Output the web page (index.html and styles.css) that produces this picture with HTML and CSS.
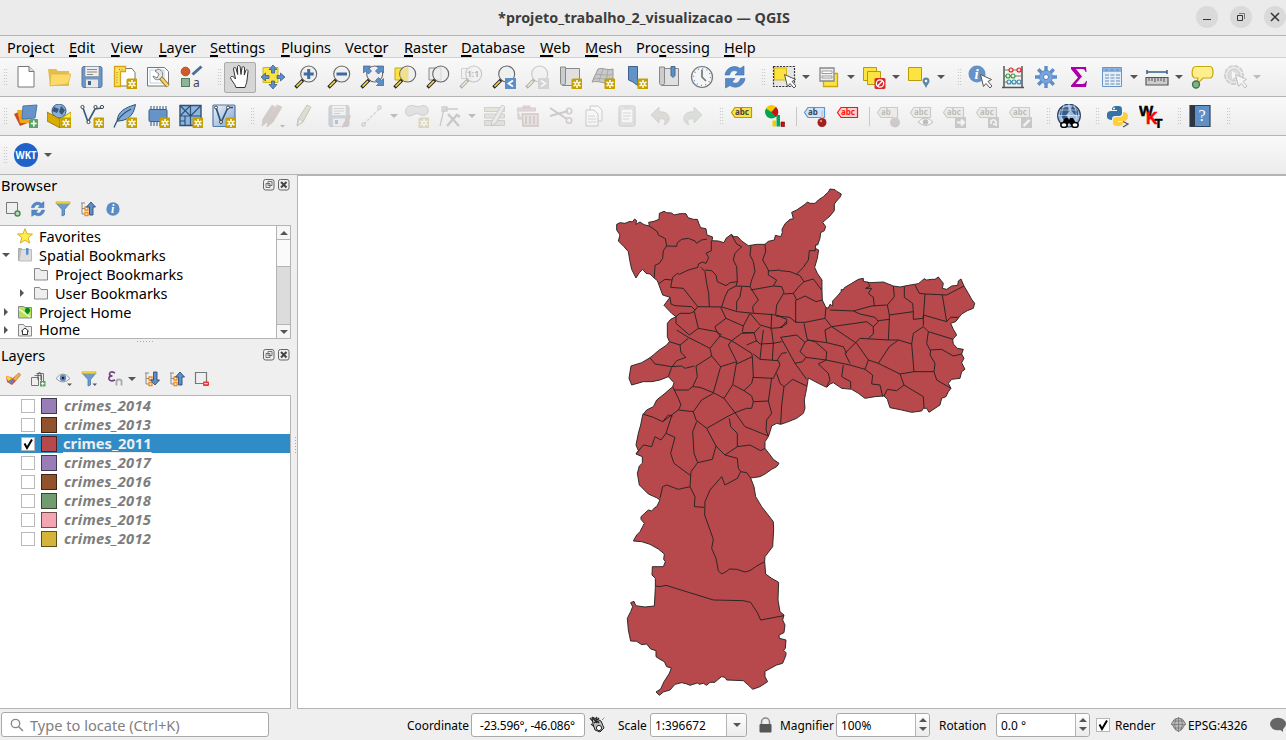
FILE: index.html
```
<!DOCTYPE html>
<html lang="en">
<head>
<meta charset="utf-8">
<title>*projeto_trabalho_2_visualizacao — QGIS</title>
<link rel="stylesheet" href="styles.css">
</head>
<body>
<svg class="defs" width="0" height="0">
<defs>
<linearGradient id="gb" x1="0" y1="0" x2="1" y2="1"><stop offset="0" stop-color="#eef4fa"/><stop offset="1" stop-color="#7ba3d0"/></linearGradient>
<symbol id="badge" viewBox="0 0 24 24"><rect x="13.500" y="13.500" width="11" height="11" rx="1.500" fill="#c4a000"/><path d="M19 15v8M15.500 17l7 4M22.500 17l-7 4" stroke="#fff" stroke-width="1.500"/><circle cx="19" cy="19" r="1" fill="#c4a000"/></symbol>
<symbol id="lens" viewBox="0 0 24 24"><path d="M9.500 14.500L1.500 22.500" stroke="#222" stroke-width="3.400"/><path d="M8 16L2.500 21.500" stroke="#fcd94a" stroke-width="1.700"/><circle cx="14.700" cy="9" r="8" fill="#eee" fill-opacity=".75" stroke="#666" stroke-width="1.100"/></symbol>
<symbol id="cursor" viewBox="0 0 24 24"><path d="M12.500 9.500l3 12 2.500-3 4 4.500 2-2-4-4.500 3.500-2z" fill="#fff" stroke="#555" stroke-width="1"/></symbol>
<symbol id="tag" viewBox="0 0 24 24"><path d="M1.500 8.500L5 3.500h16.500v10H5z" stroke-width="1.200"/></symbol>
<symbol id="new" viewBox="0 0 24 24"><path d="M4 1.500h11l5 5V22H4z" fill="#fff" stroke="#777" stroke-width="1"/><path d="M15 1.500v5h5" fill="#ddd" stroke="#777"/></symbol>
<symbol id="open" viewBox="0 0 24 24"><path d="M1 4h8l2 2h11v15H3z" fill="#e5bd4a"/><path d="M4 9h20l-3 10-18 2z" fill="#fbd96b" stroke="#e0b547" stroke-width=".8"/></symbol>
<symbol id="save" viewBox="0 0 24 24"><rect x="2" y="1.500" width="20" height="21" rx="2" fill="#6b97c6" stroke="#54779d"/><path d="M5 1.500h14v10H5z" fill="#eee" stroke="#888" stroke-width=".6"/><path d="M7 4.500h10M7 7h10M7 9.500h6" stroke="#888"/><path d="M6 14.500h12v8H6z" fill="#e8e8e8"/><path d="M8 16h3v4H8z" fill="#3d618c"/></symbol>
<symbol id="layout" viewBox="0 0 24 24"><path d="M3 3.500h16l3 4V21H3z" fill="#fff" stroke="#777"/><path d="M1.500 1.500h11v5h-5v15h-6z" fill="#fce05f" stroke="#d5a517" stroke-width="1.300"/><path d="M4 7v12M6 4.500h5" stroke="#a98308" stroke-dasharray="1 1.500"/><use href="#badge"/></symbol>
<symbol id="wrench" viewBox="0 0 24 24"><path d="M1.500 2.500h17l4 4V21h-21z" fill="#fff" stroke="#777"/><path d="M4 5h14v13H4z" fill="none" stroke="#b8cff0"/><path d="M13 11l9 10" stroke="#9c7b2b" stroke-width="4.500"/><path d="M15 13l7 8" stroke="#f5d56c" stroke-width="2.500"/><path d="M9 6l4 3-2 4-4-2c1 4 5 5 8 2s2-8-3-9z" fill="#e6e6e6" stroke="#666" stroke-width=".8"/></symbol>
<symbol id="style" viewBox="0 0 24 24"><circle cx="6.500" cy="6.500" r="4.300" fill="#d05b31" stroke="#b04c25"/><path d="M13.500 9.500l9-8" stroke="#4d6f96" stroke-width="3"/><rect x="2.500" y="13.500" width="8" height="8" fill="#8fb497" stroke="#547f5d"/><text x="14" y="22" font-family="Noto Sans" font-size="12" fill="#444">a</text></symbol>
<symbol id="pan" viewBox="0 0 24 24"><path d="M8 22.500c-1-4-5-7-5.500-10 1-2 3-1 5 1.500L5.500 4c0-2 2-2 2.500-.5l1.700 6L9.500 2c0-2 2.500-2 2.700 0l.8 7.500L14 2.500c.5-1.500 2.500-1 2.500.5L16.300 10l1.500-4.500c.7-1.500 2.500-.5 2.200 1L19 15c-.3 4-1.500 5-2 7.500z" fill="#fff" stroke="#333" stroke-width="1"/></symbol>
<symbol id="pansel" viewBox="0 0 24 24"><path d="M2 2.500h15v15H2z" fill="#fbe342" stroke="#d1b41a"/><path d="M12 0l4 4.500h-2.500V8h-3V4.500H8zM12 24l4-4.500h-2.500V16h-3v3.500H8zM0 12l4.500-4v2.500H8v3H4.500V16zM24 12l-4.500-4v2.500H16v3h3.500V16z" fill="#5d8fc6" stroke="#3d618c" stroke-width=".8"/></symbol>
<symbol id="zin" viewBox="0 0 24 24"><use href="#lens"/><path d="M14.700 4v10M9.700 9h10" stroke="#3d6ba0" stroke-width="3"/></symbol>
<symbol id="zout" viewBox="0 0 24 24"><use href="#lens"/><path d="M9.500 9h10.500" stroke="#3d6ba0" stroke-width="3"/></symbol>
<symbol id="zfull" viewBox="0 0 24 24"><use href="#lens"/><path d="M3.500 1h7l-2 2 3 3-3 3-3-3-2 2zM23.500 1h-7l2 2-3 3 3 3 3-3 2 2zM23.500 20.500h-7l2-2-3-3 3-3 3 3 2-2z" fill="#5d8fc6" stroke="#3d618c" stroke-width=".7"/></symbol>
<symbol id="zsel" viewBox="0 0 24 24"><path d="M2 3h13v12H2z" fill="#fbe342" stroke="#c9a90f"/><use href="#lens"/><path d="M7.500 6l7.500-4v14H11L7.500 12z" fill="#efe07a" opacity=".8"/></symbol>
<symbol id="zlay" viewBox="0 0 24 24"><path d="M3 3h12v12H3z" fill="#eee" stroke="#888"/><use href="#lens"/></symbol>
<symbol id="z11" viewBox="0 0 24 24"><path d="M2.500 3.500h10v10h-10z" fill="#eee" stroke="#888"/><use href="#lens"/><text x="8" y="12" font-family="Noto Sans" font-size="8.500" font-weight="700" fill="#333">1:1</text></symbol>
<symbol id="zlast" viewBox="0 0 24 24"><use href="#lens"/><rect x="13" y="13" width="11" height="11" fill="#5d8fc6"/><path d="M21 15.500l-4.500 3 4.500 3" fill="none" stroke="#fff" stroke-width="1.700"/></symbol>
<symbol id="znext" viewBox="0 0 24 24"><use href="#lens"/><rect x="13" y="13" width="11" height="11" fill="#999"/><path d="M16 15.500l4.500 3-4.500 3" fill="none" stroke="#fff" stroke-width="1.700"/></symbol>
<symbol id="book" viewBox="0 0 24 24"><path d="M2.500 2h5v18h-3c-2 0-2-2-2-2z" fill="#ccc" stroke="#888"/><path d="M7.500 3.500h14v17h-17c2 0 3-1 3-3z" fill="#e0e0e0" stroke="#888"/></symbol>
<symbol id="viewnew" viewBox="0 0 24 24"><use href="#book"/><use href="#badge"/></symbol>
<symbol id="view3d" viewBox="0 0 24 24"><path d="M7 4c5-2 9 2 15 0v14c-7 2-14-3-21-1z" fill="#c9c9c9" stroke="#999"/><path d="M4 10c6-2 11 2 18-1M3 14c7-2 12 2 19-1M12 4L8 16M17 5l-2 12" fill="none" stroke="#aaa"/><use href="#badge"/></symbol>
<symbol id="bmnew" viewBox="0 0 24 24"><path d="M4.500 1.500h9v19l-4.500-3.500-4.500-2z" fill="#6292c6" stroke="#3d618c"/><use href="#badge"/></symbol>
<symbol id="bms" viewBox="0 0 24 24"><use href="#book"/><path d="M14 1.500h4v9l-2 2-2-2z" fill="#5d8fc6" stroke="#3d618c" stroke-width=".9"/></symbol>
<symbol id="clock" viewBox="0 0 24 24"><circle cx="12" cy="12" r="10.500" fill="#f3f5f7" stroke="#777" stroke-width="1.200"/><circle cx="12" cy="12" r="8.500" fill="none" stroke="#6394c8" stroke-width="1.300" stroke-dasharray="1 3.450"/><path d="M12 4.500V12l4 4" fill="none" stroke="#777" stroke-width="1.700"/></symbol>
<symbol id="refresh" viewBox="0 0 24 24"><path d="M2 10C3 3 11-1 17 3.500L21 1v9h-9l3-3.200C11 4.500 8 5.500 6.500 10z" fill="#5589c8" stroke="#3d6da8" stroke-width=".6"/><path d="M22 13.500C21 21 13 24.500 7 20.500L2.500 23v-9.500h9.500l-3 3.500c4 2.500 7 1 8.500-3.500z" fill="#5589c8" stroke="#3d6da8" stroke-width=".6"/></symbol>
<symbol id="select" viewBox="0 0 24 24"><path d="M1.500 1.500h21v20h-21z" fill="#e6e6e6" stroke="#333" stroke-width="1.200" stroke-dasharray="2 1.200"/><path d="M2.500 3h12v12h-12z" fill="#fbe342" stroke="#d1b41a"/><use href="#cursor"/></symbol>
<symbol id="selform" viewBox="0 0 24 24"><path d="M6.500 8.500h14v13h-14z" fill="#fbe342" stroke="#c9a90f" stroke-width="1.300"/><path d="M3 3h14v13H3z" fill="#eee" stroke="#888" stroke-width="1.300"/><path d="M5 6h10v2.500H5zM5 11h10v2H5z" fill="#fff" stroke="#888" stroke-width=".8"/></symbol>
<symbol id="desel" viewBox="0 0 24 24"><path d="M1.500 2.500h13v13h-13z" fill="#fbe342" stroke="#b89b06"/><path d="M5.500 6.500h13v13h-13z" fill="#fbe342" stroke="#b89b06"/><rect x="12.500" y="13" width="11" height="11" rx="1.500" fill="#d82a2a"/><circle cx="18" cy="18.500" r="3.700" fill="none" stroke="#fff" stroke-width="1.300"/><path d="M15.500 21l5-5" stroke="#fff" stroke-width="1.300"/></symbol>
<symbol id="selloc" viewBox="0 0 24 24"><path d="M1.500 2.500h13v13h-13z" fill="#fbe342" stroke="#b89b06"/><path d="M19 23c-1-3-3.500-4.500-3.500-7a3.500 3.500 0 0 1 7 0c0 2.500-2.500 4-3.500 7z" fill="#5f86a6"/><circle cx="19" cy="16" r="1.300" fill="#fff"/></symbol>
<symbol id="info" viewBox="0 0 24 24"><circle cx="12" cy="12" r="10" fill="#5c8cc4"/><text x="9" y="18" font-family="Liberation Serif" font-size="18" font-style="italic" font-weight="700" fill="#fff">i</text></symbol>
<symbol id="ident" viewBox="0 0 24 24"><circle cx="9" cy="9" r="8.500" fill="#6593c8"/><text x="6.500" y="14" font-family="Liberation Serif" font-size="15" font-style="italic" font-weight="700" fill="#fff">i</text><use href="#cursor"/></symbol>
<symbol id="abacus" viewBox="0 0 24 24"><path d="M3 1v21M21 1v21M1 22.500h22" stroke="#555" stroke-width="1.500"/><path d="M3 5h18M3 11h18M3 17h18" stroke="#777"/><g stroke-width="1.100"><g fill="#fdd" stroke="#d22"><circle cx="10" cy="5" r="2"/><circle cx="18" cy="5" r="2"/></g><g fill="#dfd" stroke="#393"><circle cx="7" cy="11" r="2"/><circle cx="12" cy="11" r="2"/></g><g fill="#def" stroke="#38a"><circle cx="8" cy="17" r="2"/><circle cx="13" cy="17" r="2"/><circle cx="18" cy="17" r="2"/></g></g></symbol>
<symbol id="gear" viewBox="0 0 24 24"><path d="M12 1v22M1 12h22M4.200 4.200l15.600 15.600M19.800 4.200L4.200 19.800" stroke="#5c8fca" stroke-width="3.400"/><circle cx="12" cy="12" r="6.500" fill="#79a5da" stroke="#5c8fca"/><circle cx="12" cy="12" r="2.500" fill="#fff" stroke="#4c7fbd"/></symbol>
<symbol id="sigma" viewBox="0 0 24 24"><path d="M4 2h15l.5 5h-1c-.5-2.500-2-3-4-3H9l6 7.500L8.500 19H15c2.500 0 3.500-1 4-3h1l-1 6H4v-1.500L11 12.500 4 4z" fill="#a800a8"/></symbol>
<symbol id="table" viewBox="0 0 24 24"><path d="M2.500 2.500h19v19h-19z" fill="#e4eef8" stroke="#6a94c2"/><path d="M3 3h18v4H3z" fill="#8db4de"/><path d="M5 5h3M10 5h4M16 5h3M5 10h4M10.500 10h4M16 10h4M5 13h4M10.500 13h4M16 13h4M5 16h4M10.500 16h4M16 16h4M5 19h4M10.500 19h4M16 19h4" stroke="#5f8bbb" stroke-width="1"/></symbol>
<symbol id="ruler" viewBox="0 0 24 24"><path d="M2 7h20M2 5v4M22 5v4" stroke="#3a5f8a" stroke-width="1.500"/><path d="M1 12.500h22v7.500H1z" fill="#ccc" stroke="#555" stroke-width="1.200"/><path d="M4 13v3M7 13v3M10 13v4M13 13v3M16 13v3M19 13v4" stroke="#555"/></symbol>
<symbol id="tip" viewBox="0 0 24 24"><path d="M6 1.500h14c4 0 4 11.500 0 11.500h-7l-6 6 1-6H5c-4 0-4-11.500 1-11.500z" fill="#fdf08c" stroke="#c9a60c" stroke-width="1.200"/><circle cx="6" cy="19.500" r="3.500" fill="#78b87e" stroke="#4d6a50" stroke-width="1.300"/></symbol>
<symbol id="action" viewBox="0 0 24 24"><circle cx="11" cy="10" r="9" fill="#ddd" stroke="#888" stroke-width="2" stroke-dasharray="5 1"/><circle cx="11" cy="10" r="6" fill="#aaa" stroke="#777"/><path d="M9 6v8l6-4z" fill="#fff"/><use href="#cursor"/></symbol>
<symbol id="dsm" viewBox="0 0 24 24"><path d="M0 10l9-4 7 12-10 4z" fill="#cc4a29"/><path d="M3 6h12v13H6z" fill="#f0a818"/><path d="M9 2l14-1-2 13-13 1z" fill="#6694c8" stroke="#4a76a8"/><rect x="15" y="15" width="9.500" height="9.500" rx="1.500" fill="#5ba266"/><path d="M19.800 16.500v6M16.800 19.500h6" stroke="#fff" stroke-width="1.600"/></symbol>
<symbol id="gpkg" viewBox="0 0 24 24"><circle cx="12" cy="7" r="7" fill="#89b0d6" stroke="#3a5d85"/><path d="M7 3l5 2-2 4-5-2zM14 2l4 4-3 5-3-3z" fill="#38597d"/><path d="M0 8l13 7v9L0 17z" fill="#d8ac00" stroke="#8a6d00" stroke-width=".8"/><path d="M13 15l11-7v9l-11 7z" fill="#fff04a" stroke="#a58500" stroke-width=".8"/><use href="#badge"/></symbol>
<symbol id="shp" viewBox="0 0 24 24"><path d="M3 4l5 14 7-13 7-1" fill="none" stroke="#385c85" stroke-width="1.700"/><g fill="#fff" stroke="#444"><circle cx="2.500" cy="3" r="1.600"/><circle cx="15.500" cy="3" r="1.600"/><circle cx="22" cy="3" r="1.600"/><circle cx="8.500" cy="18" r="1.600"/></g><use href="#badge"/></symbol>
<symbol id="spatia" viewBox="0 0 24 24"><path d="M4 17C5 7 12 4 22.500 0.500 21 8 18 16 6 17z" fill="#7fa9d6" stroke="#2f5279"/><path d="M1 23.500C4 15 10 9 18 5" fill="none" stroke="#2f5279" stroke-width="1.200"/><use href="#badge"/></symbol>
<symbol id="memory" viewBox="0 0 24 24"><path d="M5 2v20M8 2v20M11 2v20M14 2v20M17 2v20M20 2v20" stroke="#2f5279"/><rect x="3" y="5.500" width="18" height="12" rx="1" fill="#6694c8" stroke="#3d618c"/><use href="#badge"/></symbol>
<symbol id="mesh" viewBox="0 0 24 24"><path d="M1 1.500h21v20H1z" fill="#8fb4de" stroke="#2f5279" stroke-width="1.400"/><path d="M11.500 1v21M1 12h21M1 1.500L11.500 12M22 1.500L11.500 12M11.500 1.500L1 12M6 12v10M1 17h5" fill="none" stroke="#2f5279" stroke-width="1.200"/><use href="#badge"/></symbol>
<symbol id="virt" viewBox="0 0 24 24"><rect x="1" y="1" width="22" height="21.500" rx="1" fill="url(#gb)" stroke="#5179a6" stroke-width="1.200"/><path d="M4 3.500l5 15 7-15h5" fill="none" stroke="#2f5279" stroke-width="1.700"/><g fill="#fff" stroke="#444"><circle cx="4" cy="3.500" r="1.500"/><circle cx="16" cy="3.500" r="1.500"/><circle cx="9" cy="18" r="1.500"/></g><use href="#badge"/></symbol>
<symbol id="pen" viewBox="0 0 24 24"><path d="M4 15L13 1l4 2-8 15-6 4z" fill="#c0b060" stroke="#666"/><path d="M3.500 21.500L5 15l4 2.500z" fill="#eee" stroke="#666" stroke-width=".7"/></symbol>
<symbol id="pens" viewBox="0 0 24 24"><path d="M2 15L11 1l3 2-8 15-5 4zM7 16l9-15 5 2-9 15-6 5z" fill="#b07060" stroke="#888"/><path d="M19 21h5l-2.500 2.500z" fill="#444"/></symbol>
<symbol id="savee" viewBox="0 0 24 24"><use href="#save"/><path d="M16 20l6-10 2 2-5 10-4 2z" fill="#b07060"/></symbol>
<symbol id="line" viewBox="0 0 24 24"><path d="M4 20L20 4" stroke="#999" stroke-width="1.500" stroke-dasharray="3 1.500"/><path d="M2 19h3v3H2zM18 2h3v3h-3z" fill="#ddd" stroke="#777"/></symbol>
<symbol id="blob" viewBox="0 0 24 24"><path d="M4 2c4-2 7 2 12 0s8 2 7 6-6 4-9 2-6 2-10 2-5-8 0-10z" fill="#bbb" stroke="#777"/><use href="#badge"/></symbol>
<symbol id="vertex" viewBox="0 0 24 24"><path d="M2 22L6 5h14M4 3h5v4H4z" fill="none" stroke="#777" stroke-width="1.300"/><path d="M9 22l10-11 3 2M10 10l11 12" fill="none" stroke="#777" stroke-width="2.500"/></symbol>
<symbol id="attr" viewBox="0 0 24 24"><path d="M1.500 3.500h20v4h-20zM1.500 10h20v4h-20zM1.500 16.500h20v5h-20z" fill="#b9c98a" stroke="#888"/><path d="M9 17L19 1l3 2-9 16-5 3z" fill="#ddd" stroke="#777"/></symbol>
<symbol id="trash" viewBox="0 0 24 24"><path d="M1.500 4h18v3h-18zM7 2h7v2H7zM2 7v8h4" fill="#c99" stroke="#a77"/><path d="M6 10h16v12H7z" fill="#dbb" stroke="#a66" stroke-width="1.300"/><path d="M10 12v8M14 12v8M18 12v8" stroke="#a66" stroke-width="1.500"/></symbol>
<symbol id="cut" viewBox="0 0 24 24"><path d="M1 4l17 11M1 12l18-5" stroke="#777" stroke-width="2"/><g fill="none" stroke="#a77" stroke-width="1.600"><circle cx="20" cy="7" r="2.700"/><circle cx="20" cy="16.500" r="2.700"/></g></symbol>
<symbol id="copy" viewBox="0 0 24 24"><path d="M8 2h8l4 4v11H8z" fill="#fff" stroke="#777"/><path d="M4 6h8l4 4v12H4z" fill="#fff" stroke="#777"/><path d="M6 12h7M6 15h8M6 18h8" stroke="#999"/></symbol>
<symbol id="paste" viewBox="0 0 24 24"><rect x="4" y="2" width="16" height="20" rx="1.500" fill="#ccc" stroke="#777"/><path d="M6 5h12v14H6z" fill="#fff" stroke="#999"/><path d="M9 1h6v4H9z" fill="#aaa"/><path d="M8 9h8M8 12h8M8 15h6" stroke="#999"/></symbol>
<symbol id="undo" viewBox="0 0 24 24"><path d="M3 11l8-8v5c8-1 11 4 10 8-1 3-3 4-5 5 3-5 0-7-5-6v4z" fill="#b5a890" stroke="#987"/></symbol>
<symbol id="redo" viewBox="0 0 24 24"><path d="M21 11l-8-8v5c-8-1-11 4-10 8 1 3 3 4 5 5-3-5 0-7 5-6v4z" fill="#a8b5a0" stroke="#898"/></symbol>
<symbol id="laby" viewBox="0 0 24 24"><use href="#tag" fill="#fbe342" stroke="#b89b06"/><text x="5" y="11.200" class="abc">abc</text></symbol>
<symbol id="diag" viewBox="0 0 24 24"><circle cx="8.500" cy="8" r="6.500" fill="#00a651"/><path d="M8.500 8L3 4.500A6.500 6.500 0 0 1 13 3z" fill="#fbc800"/><path d="M8.500 8L13 3a6.500 6.500 0 0 1 0 10z" fill="#c11"/><path d="M9.500 16.500h3.500v6H9.500z" fill="#fbc800"/><path d="M13.500 11h3.500v11.500h-3.500z" fill="#0a5"/><path d="M18 18h3.500v4.500H18z" fill="#c11" stroke="#700" stroke-width=".6"/></symbol>
<symbol id="labpin" viewBox="0 0 24 24"><use href="#tag" fill="#cfe4ff" stroke="#5599e0"/><text x="5" y="11.200" class="abc">ab</text><path d="M19 7v8" stroke="#ccc" stroke-width="2"/><circle cx="19" cy="18.500" r="4.500" fill="#a31f1f"/><circle cx="18" cy="17" r="1.200" fill="#d88"/></symbol>
<symbol id="labred" viewBox="0 0 24 24"><use href="#tag" fill="#ffd0d0" stroke="#f11"/><text x="5" y="11.200" class="abc warn">abc</text></symbol>
<symbol id="labg" viewBox="0 0 24 24"><use href="#tag" fill="#e0dcc0" stroke="#777"/><text x="5" y="11.200" class="abc">abc</text></symbol>
<symbol id="labp" viewBox="0 0 24 24"><use href="#tag" fill="#e0dcc0" stroke="#777"/><text x="5" y="11.200" class="abc">ab</text><path d="M19 7v8" stroke="#ddd" stroke-width="3"/><circle cx="19" cy="18.500" r="5" fill="#977"/></symbol>
<symbol id="labe" viewBox="0 0 24 24"><use href="#labg"/><path d="M9 18q7-8 15 0-7 7-15 0z" fill="#fff" stroke="#555"/><circle cx="16.500" cy="18" r="2.700" fill="#555"/></symbol>
<symbol id="labm" viewBox="0 0 24 24"><use href="#labg"/><path d="M13 13h11v11H13z" fill="#777"/><path d="M15 18.500h7M19 15.500l3 3-3 3" stroke="#fff" stroke-width="2" fill="none"/></symbol>
<symbol id="labr" viewBox="0 0 24 24"><use href="#labg"/><path d="M13 13h11v11H13z" fill="#777"/><path d="M16 20v-3q3-3 5 1v3l-3-1" stroke="#fff" stroke-width="1.600" fill="none"/></symbol>
<symbol id="labc" viewBox="0 0 24 24"><use href="#labg"/><path d="M13 13h11v11H13z" fill="#777"/><path d="M15.500 22l6-6" stroke="#fff" stroke-width="2.400"/></symbol>
<symbol id="globe" viewBox="0 0 24 24"><circle cx="12" cy="11.500" r="11.300" fill="#9ab9db" stroke="#23405f" stroke-width="1.300"/><path d="M4 4l7-1 2 4-4 4 3 5-4 2-5-7zM15 2l6 4v6l-4-2-3-4z" fill="#365a87"/><path d="M1 11.500h22M3 6h18M12 0v23M7 1q-5 11 0 20M17 1q5 11 0 20" fill="none" stroke="#fff" stroke-width=".5"/><path d="M4 21l4-7h3l1 2 1-2h3l4 7-5 1-3-3-3 3z" fill="#000"/><g fill="#fff" stroke="#000" stroke-width="1.500"><ellipse cx="7" cy="21" rx="3.200" ry="2.500"/><ellipse cx="18" cy="21" rx="3.200" ry="2.500"/></g></symbol>
<symbol id="python" viewBox="0 0 24 24"><path d="M11 2c5 0 5 1 5 5v2c0 2-1 3-3 3H9c-2 0-3 1-3 3v1C0 16 1 12 1 10s2-3 4-3h6V6H6c0-3 1-4 5-4z" fill="#3672a4"/><path d="M12 22c-5 0-5-1-5-5v-1c0-2 1-3 3-3h4c2 0 3-1 3-3V8c5 0 5 3 5 5s-2 4-4 4h-6v1h5c0 3-1 4-5 4z" fill="#fdd03b"/><circle cx="8" cy="4.500" r="1" fill="#fff"/><path d="M17 17.500l5 2.500-5 3" fill="none" stroke="#555" stroke-width="1.300"/></symbol>
<symbol id="wkt" viewBox="0 0 24 24"><g font-family="Liberation Sans" font-weight="700" stroke-width=".5"><text x="0" y="11.500" font-size="15" stroke="#000">W</text><text x="7" y="20" font-size="16" fill="#f00" stroke="#f00">K</text><text x="15.500" y="23.500" font-size="13" stroke="#000">T</text></g></symbol>
<symbol id="help" viewBox="0 0 24 24"><path d="M2 1.500h20v21H2z" fill="#5e90c8" stroke="#31445c" stroke-width="1.200"/><path d="M2 1.500h5v21H2z" fill="#2c3540"/><text x="10.500" y="17" font-family="Liberation Serif" font-size="16" fill="#fff">?</text></symbol>
<symbol id="wktb" viewBox="0 0 24 24"><circle cx="12" cy="12" r="12" fill="#1f62c9"/><text x="1.500" y="16" font-family="Open Sans" font-size="10.500" font-weight="700" fill="#fff" textLength="21" lengthAdjust="spacingAndGlyphs">WKT</text></symbol>
<symbol id="addl" viewBox="0 0 16 16"><path d="M1.500 1.500h11v11h-11z" fill="none" stroke="#777"/><circle cx="12.500" cy="12.500" r="2.500" fill="#b4dcb8" stroke="#4d8a55" stroke-width="1.400"/></symbol>
<symbol id="funnel" viewBox="0 0 16 16"><path d="M1 2l6 6.500V15l2.500-1V8.500L15 2z" fill="#6c9bd0" stroke="#4878ac" stroke-width=".8"/><path d="M1 .8h14v2H1z" fill="#f8d93e" stroke="#c8a80e" stroke-width=".6"/></symbol>
<symbol id="tree" viewBox="0 0 16 16"><path d="M1 2h4M2 2v11h4M2 7.500h4" fill="none" stroke="#888"/><path d="M5 6h3v3H5zM5 11.500h3v3H5z" fill="#fff" stroke="#f08a1c" stroke-width="1.300"/></symbol>
<symbol id="collapse" viewBox="0 0 16 16"><use href="#tree"/><path d="M11 1l4.500 5H13v8H9.500V6H6.500z" fill="#5e8fc6" stroke="#2c4f78" stroke-width=".9"/></symbol>
<symbol id="expand" viewBox="0 0 16 16"><use href="#tree"/><path d="M11 14l4.500-5H13V1H9.500v8H6.500z" fill="#5e8fc6" stroke="#2c4f78" stroke-width=".9"/></symbol>
<symbol id="brush" viewBox="0 0 16 16"><path d="M1 5l5 1 5 4-4 4-5-3z" fill="#e8472f"/><path d="M1 5l4 1 2 2-4 2z" fill="#fbd52e"/><path d="M3 11l4-3 2 2-3 3z" fill="#5588cc"/><path d="M8 7l6-5 1.500 2-5 6z" fill="#eeb04e" stroke="#b37a1e" stroke-width=".7"/></symbol>
<symbol id="group" viewBox="0 0 16 16"><path d="M1.500 6.500h7v8h-7zM4.500 4.500h7v8M6.500 2.500h7v8" fill="none" stroke="#777"/><path d="M8 9V2.500q1.500-2 3 0V9" fill="none" stroke="#555"/><path d="M10 10h5.500v5.500H10z" fill="#5aa066"/><path d="M12.700 11v3.500M11 12.700h3.500" stroke="#fff"/></symbol>
<symbol id="eye" viewBox="0 0 16 16"><path d="M0 7.500q7-9 14 0-7 7-14 0z" fill="#f6f6f6" stroke="#999"/><circle cx="7" cy="7" r="3.200" fill="#5b8ac0"/><circle cx="7" cy="7" r="1.300" fill="#222"/><path d="M11 12.500h5L13.500 15z" fill="#555"/></symbol>
<symbol id="funneld" viewBox="0 0 16 16"><use href="#funnel"/><path d="M11.500 12.500h4.500l-2.200 2.500z" fill="#555"/></symbol>
<symbol id="eps" viewBox="0 0 16 16"><path d="M8 2Q3-.5 2.500 3q0 2 3 2-4 0-3.500 3Q3 11 8 9" fill="none" stroke="#73457e" stroke-width="1.700"/><path d="M9.500 14.500v-5q2.500-2 5 0v5" fill="none" stroke="#aaa" stroke-width="1.800"/></symbol>
<symbol id="reml" viewBox="0 0 16 16"><path d="M1.500 1.500h11v11h-11z" fill="none" stroke="#777" stroke-width="1.200"/><rect x="9" y="10.500" width="6" height="4.500" rx="1" fill="#e33"/><path d="M10.300 12.700h3.500" stroke="#fff"/></symbol>
<symbol id="dfloat" viewBox="0 0 12 12"><rect x=".5" y=".5" width="10.500" height="10.500" rx="2" fill="none" stroke="#666"/><path d="M5 2.500h4v4H5zM3 4.500h4v4H3z" fill="#eee" stroke="#666" stroke-width=".9"/></symbol>
<symbol id="dclose" viewBox="0 0 12 12"><rect x=".5" y=".5" width="10.500" height="10.500" rx="2" fill="none" stroke="#666"/><path d="M3 3l5.500 5.500M8.500 3L3 8.500" stroke="#444" stroke-width="2"/></symbol>
<symbol id="star" viewBox="0 0 16 16"><path d="M8 .6l2 5.200 5.500.3-4.300 3.500 1.500 5.500L8 12l-4.700 3.100 1.500-5.500L.5 6.100 6 5.800z" fill="#fdf04d" stroke="#d8ac28"/></symbol>
<symbol id="folder" viewBox="0 0 16 16"><path d="M1.500 2.500h5l1.500 2h6.500v9.500h-13z" fill="#eee" stroke="#888"/></symbol>
<symbol id="phome" viewBox="0 0 16 16"><path d="M1.500 2.500h5l1.500 1h6.500V14h-13z" fill="#b5e35b" stroke="#888"/><path d="M2 5l11 8" stroke="#f4ffd8" stroke-width="1.500"/><path d="M10.500 10.500L8 7.500a2.700 2.700 0 1 1 5 0z" fill="#0a8a1c"/></symbol>
<symbol id="home" viewBox="0 0 16 16"><use href="#folder"/><path d="M4.500 9L8 6l3.500 3H10.500v3.500h-5V9z" fill="#fff" stroke="#333"/></symbol>
<symbol id="bm" viewBox="0 0 16 16"><path d="M1.500 1.500h3v12h-3z" fill="#bbb" stroke="#aaa"/><path d="M4.500 2.500h10v11.500h-12" fill="#ddd" stroke="#bbb"/><path d="M9 1h2.500v6L10 8.500 9 7z" fill="#5d8fc6"/></symbol>
</defs>
</svg>

<div class="window">
  <header class="titlebar">
    <span class="title">*projeto_trabalho_2_visualizacao — QGIS</span>
    <div class="winbtns">
      <svg width="22" height="22"><circle cx="11" cy="11" r="11" fill="#dadada"/><path d="M7 13.500h8" stroke="#333"/></svg>
      <svg width="22" height="22"><circle cx="11" cy="11" r="11" fill="#dadada"/><path d="M7.500 9.500h5v5h-5z" fill="none" stroke="#333"/><path d="M9 7.500h5.500V13" fill="none" stroke="#777"/></svg>
      <svg width="22" height="22"><circle cx="11" cy="11" r="11" fill="#dadada"/><path d="M7 7l8 8M15 7l-8 8" stroke="#333" stroke-width="1.500"/></svg>
    </div>
  </header>
  <nav class="menubar">
    <span>Pro<u>j</u>ect</span><span><u>E</u>dit</span><span><u>V</u>iew</span><span><u>L</u>ayer</span><span><u>S</u>ettings</span><span><u>P</u>lugins</span><span>Vect<u>o</u>r</span><span><u>R</u>aster</span><span><u>D</u>atabase</span><span><u>W</u>eb</span><span><u>M</u>esh</span><span>Pro<u>c</u>essing</span><span><u>H</u>elp</span>
  </nav>
  <div class="toolbar">
    <i class="grip"></i>
    <b class="btn"><svg><use href="#new"/></svg></b><b class="btn"><svg><use href="#open"/></svg></b><b class="btn"><svg><use href="#save"/></svg></b><b class="btn"><svg><use href="#layout"/></svg></b><b class="btn"><svg><use href="#wrench"/></svg></b><b class="btn"><svg><use href="#style"/></svg></b>
    <i class="grip"></i>
    <b class="btn on"><svg><use href="#pan"/></svg></b><b class="btn"><svg><use href="#pansel"/></svg></b><b class="btn"><svg><use href="#zin"/></svg></b><b class="btn"><svg><use href="#zout"/></svg></b><b class="btn"><svg><use href="#zfull"/></svg></b><b class="btn"><svg><use href="#zsel"/></svg></b><b class="btn"><svg><use href="#zlay"/></svg></b><b class="btn off"><svg><use href="#z11"/></svg></b><b class="btn"><svg><use href="#zlast"/></svg></b><b class="btn off"><svg><use href="#znext"/></svg></b><b class="btn"><svg><use href="#viewnew"/></svg></b><b class="btn"><svg><use href="#view3d"/></svg></b><b class="btn"><svg><use href="#bmnew"/></svg></b><b class="btn"><svg><use href="#bms"/></svg></b><b class="btn"><svg><use href="#clock"/></svg></b><b class="btn"><svg><use href="#refresh"/></svg></b>
    <i class="grip"></i>
    <b class="btn menu"><svg><use href="#select"/></svg></b><b class="btn menu"><svg><use href="#selform"/></svg></b><b class="btn menu"><svg><use href="#desel"/></svg></b><b class="btn menu"><svg><use href="#selloc"/></svg></b>
    <i class="grip"></i>
    <b class="btn"><svg><use href="#ident"/></svg></b><b class="btn"><svg><use href="#abacus"/></svg></b><b class="btn"><svg><use href="#gear"/></svg></b><b class="btn"><svg><use href="#sigma"/></svg></b><b class="btn menu"><svg><use href="#table"/></svg></b><b class="btn menu"><svg><use href="#ruler"/></svg></b><b class="btn"><svg><use href="#tip"/></svg></b><b class="btn menu off"><svg><use href="#action"/></svg></b>
  </div>
  <div class="toolbar">
    <i class="grip"></i>
    <b class="btn"><svg><use href="#dsm"/></svg></b><b class="btn"><svg><use href="#gpkg"/></svg></b><b class="btn"><svg><use href="#shp"/></svg></b><b class="btn"><svg><use href="#spatia"/></svg></b><b class="btn"><svg><use href="#memory"/></svg></b><b class="btn"><svg><use href="#mesh"/></svg></b><b class="btn"><svg><use href="#virt"/></svg></b>
    <i class="grip"></i>
    <b class="btn off"><svg><use href="#pens"/></svg></b><b class="btn off"><svg><use href="#pen"/></svg></b><b class="btn off"><svg><use href="#savee"/></svg></b><b class="btn menu off"><svg><use href="#line"/></svg></b><b class="btn off"><svg><use href="#blob"/></svg></b><b class="btn menu off"><svg><use href="#vertex"/></svg></b><b class="btn off"><svg><use href="#attr"/></svg></b><b class="btn off"><svg><use href="#trash"/></svg></b><b class="btn off"><svg><use href="#cut"/></svg></b><b class="btn off"><svg><use href="#copy"/></svg></b><b class="btn off"><svg><use href="#paste"/></svg></b><b class="btn off"><svg><use href="#undo"/></svg></b><b class="btn off"><svg><use href="#redo"/></svg></b>
    <i class="grip"></i>
    <b class="btn"><svg><use href="#laby"/></svg></b><b class="btn"><svg><use href="#diag"/></svg></b><i class="sep"></i><b class="btn"><svg><use href="#labpin"/></svg></b><b class="btn"><svg><use href="#labred"/></svg></b><i class="sep"></i><b class="btn off"><svg><use href="#labp"/></svg></b><b class="btn off"><svg><use href="#labe"/></svg></b><b class="btn off"><svg><use href="#labm"/></svg></b><b class="btn off"><svg><use href="#labr"/></svg></b><b class="btn off"><svg><use href="#labc"/></svg></b>
    <i class="grip"></i>
    <b class="btn"><svg><use href="#globe"/></svg></b>
    <i class="grip"></i>
    <b class="btn"><svg><use href="#python"/></svg></b><b class="btn"><svg><use href="#wkt"/></svg></b>
    <i class="grip"></i>
    <b class="btn"><svg><use href="#help"/></svg></b>
    <i class="grip"></i>
  </div>
  <div class="toolbar">
    <i class="grip"></i>
    <b class="btn menu"><svg><use href="#wktb"/></svg></b>
  </div>

  <main class="main">
    <aside class="docks">
      <div class="dockhead"><span>Browser</span><svg><use href="#dfloat"/></svg><svg><use href="#dclose"/></svg></div>
      <div class="dockbar">
        <svg><use href="#addl"/></svg><svg><use href="#refresh"/></svg><svg><use href="#funnel"/></svg><svg><use href="#collapse"/></svg><svg><use href="#info"/></svg>
      </div>
      <div class="tree browser">
        <ul class="list">
          <li><i class="tw"></i><svg><use href="#star"/></svg>Favorites</li>
          <li><i class="tw down"></i><svg><use href="#bm"/></svg>Spatial Bookmarks</li>
          <li class="sub"><i class="tw"></i><svg><use href="#folder"/></svg>Project Bookmarks</li>
          <li class="sub"><i class="tw right"></i><svg><use href="#folder"/></svg>User Bookmarks</li>
          <li><i class="tw right"></i><svg><use href="#phome"/></svg>Project Home</li>
          <li><i class="tw right"></i><svg><use href="#home"/></svg>Home</li>
        </ul>
        <div class="scroll"><i class="sb up"></i><i class="thumb"></i><i class="rail"></i><i class="sb dn"></i></div>
      </div>
      <div class="split"></div>
      <div class="dockhead"><span>Layers</span><svg><use href="#dfloat"/></svg><svg><use href="#dclose"/></svg></div>
      <div class="dockbar layers">
        <svg><use href="#brush"/></svg><svg><use href="#group"/></svg><svg><use href="#eye"/></svg><svg><use href="#funneld"/></svg><svg><use href="#eps"/></svg><i class="arrow"></i><svg><use href="#expand"/></svg><svg><use href="#collapse"/></svg><svg><use href="#reml"/></svg>
      </div>
      <ul class="tree layerlist">
        <li><i class="check"></i><i class="sw purple"></i><span>crimes_2014</span></li>
        <li><i class="check"></i><i class="sw brown"></i><span>crimes_2013</span></li>
        <li class="sel"><i class="check"><svg width="12" height="12"><path d="M2.500 5.500l2.500 4.500L10 1.500" fill="none" stroke="#000" stroke-width="2"/></svg></i><i class="sw red"></i><span>crimes_2011</span></li>
        <li><i class="check"></i><i class="sw purple"></i><span>crimes_2017</span></li>
        <li><i class="check"></i><i class="sw brown"></i><span>crimes_2016</span></li>
        <li><i class="check"></i><i class="sw green"></i><span>crimes_2018</span></li>
        <li><i class="check"></i><i class="sw pink"></i><span>crimes_2015</span></li>
        <li><i class="check"></i><i class="sw gold"></i><span>crimes_2012</span></li>
      </ul>
    </aside>
    <div class="vsplit"></div>
    <section class="canvas">
      <svg width="988" height="532" viewBox="298 176 988 532">
        <g class="map">
          <path class="area" transform="translate(600 180) scale(.33333)" d="M50 133L60 128 75 130 90 124 97 126 104 117 110 122 107 133 120 126 132 134 148 138 146 127 162 124 177 118 178 100 192 94 200 98 215 99 222 105 240 101 258 101 264 113 280 118 292 118 297 132 302 143 318 146 321 165 338 171 336 182 355 183 372 188 378 175 394 163 402 170 413 170 425 183 445 197 470 193 495 193 505 184 523 180 526 166 542 170 547 158 546 148 556 130 570 118 580 116 575 97 590 90 615 73 622 66 630 70 645 70 655 60 670 50 685 36 690 27 705 29 710 34 724 42 720 52 710 63 703 72 703 92 690 108 668 127 677 140 673 152 662 158 660 175 653 195 647 195 646 205 656 210 652 235 644 262 652 280 666 300 666 330 667 360 678 383 685 384 690 373 698 378 698 363 715 345 723 335 724 328 730 330 733 323 755 310 775 298 790 295 790 304 810 308 850 306 880 318 900 321 925 316 955 311 965 303 972 296 980 300 995 298 1005 298 1015 291 1022 300 1030 310 1027 325 1040 328 1055 318 1073 316 1075 303 1083 297 1092 318 1105 340 1115 358 1124 370 1120 385 1102 392 1085 402 1077 412 1067 425 1052 430 1060 448 1070 465 1058 478 1060 492 1072 505 1090 508 1085 522 1092 535 1085 548 1095 568 1085 575 1080 595 1055 598 1045 610 1053 625 1045 635 1038 650 1025 655 1020 675 1005 685 987 697 980 685 970 685 965 693 935 697 905 690 870 683 862 658 852 648 825 650 795 655 775 640 755 628 725 625 700 608 690 612 680 622 655 610 625 594 620 625 617 640 613 660 615 685 610 700 590 715 560 727 542 733 530 730 515 738 510 755 505 770 495 785 495 805 508 822 520 838 537 850 530 860 515 868 495 882 480 890 452 894 462 920 467 950 485 980 520 1025 521 1050 518 1100 495 1130 494 1145 497 1182 515 1195 536 1207 534 1260 540 1295 552 1305 548 1320 555 1335 552 1358 537 1365 538 1375 558 1380 556 1405 551 1411 558 1418 558 1425 548 1450 530 1455 495 1474 495 1490 503 1505 480 1520 458 1528 448 1518 430 1502 380 1500 375 1492 365 1490 352 1500 345 1507 330 1507 320 1516 310 1510 298 1513 292 1509 270 1516 258 1511 245 1508 225 1513 210 1530 190 1536 178 1546 168 1536 182 1527 192 1505 208 1480 214 1464 200 1460 193 1445 180 1438 168 1430 168 1412 152 1407 140 1392 125 1394 110 1384 92 1383 85 1350 82 1315 92 1295 98 1280 92 1268 102 1264 107 1277 135 1281 163 1278 166 1222 166 1195 156 1185 157 1160 190 1160 196 1145 191 1138 193 1122 175 1107 150 1093 125 1085 100 1083 110 1065 120 1055 133 1030 123 1018 123 1010 145 990 155 993 165 982 170 980 180 960 170 953 160 949 145 942 118 915 112 880 118 858 127 850 127 830 108 822 115 812 108 795 115 760 122 735 128 705 140 690 160 680 170 660 195 640 218 620 222 608 205 590 180 600 155 605 130 605 95 615 87 595 93 558 125 548 150 533 160 525 175 512 200 495 208 485 202 470 202 430 212 418 228 410 215 400 192 376 210 352 188 345 178 318 172 302 158 290 150 282 138 280 128 268 118 278 108 294 95 268 90 245 85 215 72 200 55 183 60 165 50 150Z"/>
          <path class="edge" transform="translate(600 180) scale(.33333)" d="M148 138L172 155 175 165 196 176 200 198 190 212 188 235 178 250 165 256 163 292M200 198L230 199 232 188 245 178 265 175 285 183 290 190 305 180 321 177M334 182V212L318 220 326 232 318 250 308 246 295 252 294 262 265 270 238 283 232 280 218 292 216 302 212 322M178 310L195 298 216 300M212 322L250 325 293 380 282 395 270 400 240 400 228 410M210 352L213 372 225 377 275 380 285 390M293 380L365 381 412 395 450 399 520 404 540 408M303 262L315 275 320 310 326 340 328 380M315 270L335 272 348 285 352 305 378 317 390 308 412 305 410 260 400 240 405 220 425 200 410 192 394 163M412 305L408 318 385 330 375 350 365 381M408 318L450 320 455 300 465 275 460 245 450 225 453 197M425 320L420 350 410 365V392M450 320L475 360 458 380 460 398M452 330L520 318 530 300 505 285V270L488 240 497 215 495 193M505 273L540 270M520 318L545 320 552 338 530 375 527 404M362 382L378 415 345 440 350 455M378 415L430 438 427 455M430 438L450 400M350 455L295 445 283 395M295 445L268 465 228 430 228 410M350 457L365 465M427 458H463L480 440M452 402L480 435 515 445 548 442M515 404L513 450M545 442L558 425"/>
          <path class="edge" transform="translate(780 180) scale(.33333)" d="M106 205V212H88L85 240 70 262 50 282M0 272L30 275 60 287 72 305 58 318 40 340 12 342M72 305L100 297 125 330M40 340L50 360 75 348 108 365 127 360M47 360V427M-12 408L30 412 47 427 75 427 135 415 138 383M0 410L20 418V432L0 442M2 472L50 465 75 487 60 515 78 532M72 430L82 480 140 488 135 450 155 440 135 415M150 390L220 393 275 378 320 375M220 393L240 402 285 412 295 425 280 440 260 425 155 440 230 490 265 540M262 305L270 318 257 325 275 325 265 340 280 352 283 378M340 318L343 350 322 375 328 405 400 395 398 370 373 352V320M295 422L328 418 325 480 240 475 195 520 210 550M328 405V420M280 440V462L265 475M140 488L190 500 200 520M75 487L85 480 105 485 140 515 138 540 78 532M138 540L210 555 255 568 265 540 295 550 328 500 355 480 325 480M355 480L395 492 400 460 430 440 445 455 440 490 450 510 485 508 520 528 545 522M405 315L418 340 435 342 500 345 552 318M435 342L430 415 400 418V395M430 405V437M430 405L500 425 487 345M500 425L512 412 537 412M445 455L520 478M395 492L402 575 360 582 295 550M402 575L462 575 465 550 450 525 452 510M462 575L470 600 513 625M360 582L372 615 430 650 432 685M372 615L350 632 322 628 312 648M255 568L278 585 275 612 300 615 308 650M190 555L185 590 212 605V625M138 540L115 552 145 580 150 600 140 620M2 472L45 550 80 598M45 550L68 545 78 532M12 620L38 598 80 618"/>
          <path class="edge" transform="translate(610 330) scale(.33333)" d="M178 35L210 45 213 68 228 82 200 92 185 112 175 140M120 83L135 102 185 110 215 108 225 115 253 108M210 45L235 25M200 0L235 22 300 55 330 18 320 2M300 55L305 78 258 108 262 140 248 170M305 78L332 110 310 188 270 172 248 170 235 180 192 180M332 110L380 95 368 165 342 205 310 188M330 18L365 32 355 45 380 95M365 32L425 70 427 80 380 102M365 32L395 10 432 8 440 35M410 45L440 32 450 42 490 40 515 35M460 0L455 40 450 88M485 0L490 40 487 90M427 80L430 140 425 160 402 182 370 165M430 72L450 88 505 92 510 105 497 130 490 145 428 142M502 90L515 70 530 68M402 182L425 198 430 215 475 213 485 145M430 215L425 235 410 235 375 248 342 205M188 170L205 205 213 225 205 240 158 275 130 262 98 252M205 240L250 245 275 210 310 190M250 245L258 270 290 295 348 262 375 248M260 275L248 305 252 370 263 398 307 388 318 348 290 295M263 398L243 425 240 470 255 500 253 530 283 532M185 258L168 310 195 322 182 370 192 400 242 437M78 372L100 345 125 350 135 320 153 330 168 310M158 275L175 255 188 258M150 505L158 470 170 465 205 478 240 470M318 348L345 375 382 385 385 415 392 425 410 428 422 444M392 425L382 445 345 465 335 440 300 480 285 515 284 555M358 265L362 290 382 310V350L345 375M375 248L405 290 430 300 475 318M382 350L420 345 452 362 465 355M475 213L485 250 470 270 468 300 475 318M500 130L510 160 522 170 515 225 512 283"/>
          <path class="edge" transform="translate(610 500) scale(.33333)" d="M136 258L150 260 168 256 310 300 400 302 422 307 442 338 452 360 522 347M284 45L310 118 305 145 318 175 325 212 335 222 350 214 358 207 380 208 405 216 420 212 440 198 464 185"/>
        </g>
      </svg>
    </section>
  </main>

  <footer class="status">
    <div class="field locate"><svg width="14" height="14"><circle cx="5.500" cy="5.500" r="4.200" fill="none" stroke="#888" stroke-width="1.300"/><path d="M8.500 8.500L13 13" stroke="#888" stroke-width="1.500"/></svg>Type to locate (Ctrl+K)</div>
    <span>Coordinate</span>
    <div class="field coord">-23.596°, -46.086°</div>
    <svg width="16" height="18"><path d="M1 2l6 7M2 8l5 4M8 1l-3 4" stroke="#333" stroke-width="1.300"/><path d="M3 1l9 4 3 7-4 4-5-2-2-6z" fill="#bbb" stroke="#222"/><path d="M4 2l4 5M7 3l3 4M5 7l5-5" stroke="#222" stroke-width="1.400"/><circle cx="10" cy="12" r="2.600" fill="#fff" stroke="#222"/><path d="M13 4l3-3" stroke="#555" stroke-dasharray="1 1"/></svg>
    <span>Scale</span>
    <div class="field combo"><span>1:396672</span><b><i class="arrow"></i></b></div>
    <svg width="13" height="16"><path d="M2.500 8V5a4 4 0 0 1 8 0v3" fill="none" stroke="#888" stroke-width="1.500"/><rect x=".5" y="7" width="12" height="8.500" rx="1" fill="#555"/></svg>
    <span>Magnifier</span>
    <div class="field spin"><span>100%</span><b><i class="arrow flip"></i><i class="arrow"></i></b></div>
    <span>Rotation</span>
    <div class="field spin"><span>0.0 °</span><b><i class="arrow flip"></i><i class="arrow"></i></b></div>
    <i class="check"><svg width="12" height="12"><path d="M2.500 5.500l2.500 4.500L10 1.500" fill="none" stroke="#000" stroke-width="2"/></svg></i>
    <span>Render</span>
    <svg width="15" height="15"><path d="M.5 6.500Q3 1 7.500 1t7 5.500L11 12l-3.500 2.500L4 12z" fill="#bbb" stroke="#777"/><path d="M0 7.500h15M7.500 0v15M2 4h11M3 11h9M5 1.500q-3 6 0 12M10 1.500q3 6 0 12" fill="none" stroke="#777" stroke-width=".8"/></svg>
    <span>EPSG:4326</span>
    <svg width="16" height="16"><ellipse cx="8" cy="7" rx="8" ry="6.300" fill="#666"/><path d="M9 12l4 3v-5z" fill="#666"/></svg>
  </footer>
</div>
</body>
</html>
```
FILE: styles.css
```
* { box-sizing: border-box; }
body { margin: 0; font-family: "Noto Sans", "Open Sans", sans-serif; font-size: 14.500px; color: #000; background: #efefef; }
.defs { position: absolute; }
.window { width: 1286px; height: 740px; display: flex; flex-direction: column; overflow: hidden; }
.titlebar { height: 36px; flex: none; background: #ebebeb; border-bottom: 1px solid #b4b4b4; display: grid; grid-template-columns: 1fr auto; align-items: center; }
.title { padding-left: 92px; text-align: center; font: 700 14.300px "Noto Sans", sans-serif; color: #3d3d3d; letter-spacing: .05px; }
.winbtns { display: flex; gap: 12px; margin-top: -2px; }
.menubar { height: 22px; flex: none; padding-left: 7px; border-bottom: 1px solid #d0d0d0; display: grid; grid-template-columns: 62px 42px 48px 51px 71px 64px 59px 57px 79px 45px 51px 88px auto; align-items: center; line-height: 20px; }
.menubar u { text-underline-offset: 2px; text-decoration-thickness: 1.500px; text-decoration-skip-ink: none; }
.toolbar { height: 39px; flex: none; display: flex; align-items: center; background: linear-gradient(#f9f9f9, #ececec); border-bottom: 1px solid #b4b4b4; }
.grip { flex: none; width: 16px; height: 18px; padding: 0 2px 0 9px; background: radial-gradient(circle, #b8b8b8 .5px, transparent .8px) content-box 0 0 / 2.500px 3px; }
.toolbar > .grip:first-child { margin-left: -6.500px; }
.btn { flex: none; width: 33px; height: 31px; display: flex; align-items: center; padding-left: 4.500px; font-weight: 400; }
.btn svg { width: 24px; height: 24px; flex: none; overflow: visible; }
.btn.on { width: 32px; margin-right: 1px; background: #d6d6d6; border: 1px solid #ababab; border-radius: 2px; padding-left: 3.500px; }
.btn.off svg { opacity: .32; filter: grayscale(.5); }
.btn.menu { width: 45px; }
.btn.menu::after { content: ""; margin-left: 6px; border: 4px solid transparent; border-top-color: #555; border-bottom: 0; }
.btn.menu.off::after { opacity: .35; }
.sep { flex: none; width: 7px; height: 19px; border-left: 1px solid #c8c8c8; margin-left: 4px; margin-right: -4px; }
.abc { font: 700 8px "Noto Sans", sans-serif; fill: #444; stroke: none; }
.abc.warn { fill: #f11; }

.main { flex: 1; min-height: 0; display: flex; }
.docks { width: 291px; flex: none; display: flex; flex-direction: column; }
.dockhead { height: 19px; flex: none; display: flex; align-items: center; padding: 0 1px; gap: 3px; line-height: 18px; }
.dockhead span { flex: 1; }
.dockhead svg { width: 12px; height: 12px; }
.dockbar { height: 31px; flex: none; display: flex; align-items: center; gap: 9px; padding: 0 0 2px 5px; }
.dockbar svg { width: 16px; height: 16px; }
.dockbar.layers svg:nth-child(3), .dockbar.layers svg:nth-child(5) { margin-left: 1px; }
.dockbar.layers .arrow { margin: 0 -1px 0 -4px; }
.arrow { display: block; width: 8px; flex: none; border: 4px solid transparent; border-top-color: #555; border-bottom: 0; }
.arrow.flip { transform: rotate(180deg); }
.tree { margin: 0; padding: 0; list-style: none; background: #fff; border: 1px solid #b4b4b4; border-left: 0; }
.browser { height: 114px; flex: none; display: flex; overflow: hidden; }
.list { flex: 1; margin: 0; padding: 0; list-style: none; }
.list li { height: 19px; line-height: 18px; display: flex; align-items: center; white-space: nowrap; }
.list li:last-child { height: 17px; line-height: 17px; }
.list li.sub { padding-left: 16px; }
.list svg { width: 16px; height: 16px; margin-right: 6px; }
.tw { width: 17px; display: flex; padding-left: 2px; }
.tw.down::before { content: ""; border: 4px solid transparent; border-top-color: #555; border-bottom: 0; }
.tw.right::before { content: ""; margin-left: 2px; border: 4px solid transparent; border-left-color: #555; border-right: 0; }
.scroll { width: 14px; border-left: 1px solid #b4b4b4; display: flex; flex-direction: column; }
.sb { height: 13px; background: #f6f6f6; display: grid; place-items: center; }
.sb::before { content: ""; border: 4px solid transparent; border-top-color: #555; border-bottom: 0; }
.sb.up::before { transform: rotate(180deg); }
.thumb { height: 28px; background: #fafafa; border: 1px solid #b4b4b4; border-width: 1px 0; }
.rail { flex: 1; background: #dcdcdc; border-bottom: 1px solid #b4b4b4; }
.split { height: 6px; flex: none; background: radial-gradient(circle, #aaa .6px, transparent .9px) 136px 1px / 3px 3px repeat; background-clip: content-box; padding: 1px 138px 2px 136px; }
.layerlist { flex: 1; }
.layerlist li { height: 19px; line-height: 19px; display: flex; align-items: center; padding-left: 21px; }
.layerlist span { margin-left: 7px; font-size: 14.700px; letter-spacing: .25px; font-weight: 700; font-style: italic; color: #7d7d7d; }
.layerlist .sel { background: #308cc6; }
.layerlist .sel span { color: #eee; font-style: normal; text-decoration: underline; text-underline-offset: 3px; text-decoration-thickness: 1px; text-decoration-skip-ink: none; margin-left: 6px; letter-spacing: 0; }
.check { flex: none; width: 14px; height: 14px; background: #fff; border: 1px solid #b8b8b8; display: block; line-height: 0; }
.sw { width: 16px; height: 16px; margin-left: 6px; border: 1px solid rgba(0,0,0,.55); }
.purple { background: #987db7; }
.brown { background: #91522d; }
.red { background: #b7484b; }
.green { background: #729b6f; }
.pink { background: #f3a6b2; }
.gold { background: #d5b43c; }
.vsplit { width: 6px; flex: none; padding: 260px 1px 256px 2px; background: radial-gradient(circle, #aaa .6px, transparent .9px) 0 0 / 3px 3px; background-clip: content-box; }
.canvas { flex: 1; background: #fff; border: 1px solid #b4b4b4; border-right: 0; overflow: hidden; }
.canvas svg { display: block; }
.area, .edge { stroke: #232323; stroke-width: 2.800; stroke-linejoin: round; }
.area { fill: #b7484b; }
.edge { fill: none; }

.status { height: 31px; flex: none; display: grid; align-items: center; padding-left: 1px; font-size: 11.900px; white-space: nowrap; grid-template-columns: 406px 64px 118px 29px 32px 109px 21px 56px 103px 57px 100px 19px 56px 17px 82px 16px; }
.field { height: 24px; display: flex; align-items: center; background: #fff; border: 1px solid #a9a9a9; border-radius: 3px; }
.locate { width: 268px; height: 25px; padding-left: 8px; gap: 6px; font-size: 14.600px; color: #7f7f7f; }
.coord { width: 114px; padding-left: 8px; letter-spacing: -.2px; }
.combo { width: 97px; }
.spin { width: 94px; }
.field > span { flex: 1; padding-left: 4px; }
.field b { align-self: stretch; border-left: 1px solid #b4b4b4; display: flex; flex-direction: column; align-items: center; justify-content: center; gap: 5px; background: linear-gradient(#fdfdfd, #ececec); border-radius: 0 3px 3px 0; }
.combo b { width: 20px; }
.spin b { width: 14px; }
```
